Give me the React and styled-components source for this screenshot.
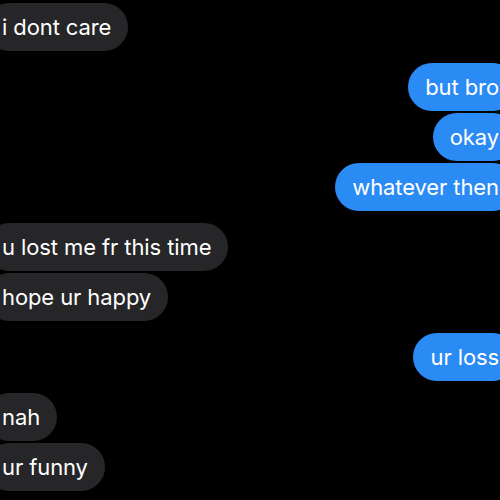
import React from "react";
import styled, { createGlobalStyle } from "styled-components";

const Global = createGlobalStyle`
  html, body { margin: 0; padding: 0; background: #000; }
  body { font-family: Inter, "Noto Sans", "Liberation Sans", sans-serif; }
`;

const Screen = styled.div`
  width: 500px;
  height: 500px;
  background: #000;
  overflow: hidden;
  display: flex;
  flex-direction: column;
  padding-top: 3px;
  box-sizing: border-box;
`;

const Bubble = styled.div`
  align-self: ${(p) => (p.$me ? "flex-end" : "flex-start")};
  margin-top: ${(p) => (p.$first ? "12px" : "2px")};
  margin-left: ${(p) => (p.$me ? "0" : "-15px")};
  margin-right: ${(p) => (p.$me ? "-16px" : "0")};
  background: ${(p) => (p.$me ? "#2b8bf5" : "#262628")};
  color: #fff;
  font-size: 22px;
  line-height: 28px;
  padding: 10px 17px;
  border-radius: 24px;
  white-space: nowrap;
  letter-spacing: -0.1px;
  &:first-child { margin-top: 0; }
`;

const messages = [
  { t: "i dont care", me: false, first: true },
  { t: "but bro", me: true, first: true },
  { t: "okay", me: true },
  { t: "whatever then", me: true },
  { t: "u lost me fr this time", me: false, first: true },
  { t: "hope ur happy", me: false },
  { t: "ur loss", me: true, first: true },
  { t: "nah", me: false, first: true },
  { t: "ur funny", me: false },
];

export default function App() {
  return (
    <>
      <Global />
      <Screen>
        {messages.map((m, i) => (
          <Bubble key={i} $me={m.me} $first={m.first}>
            {m.t}
          </Bubble>
        ))}
      </Screen>
    </>
  );
}
